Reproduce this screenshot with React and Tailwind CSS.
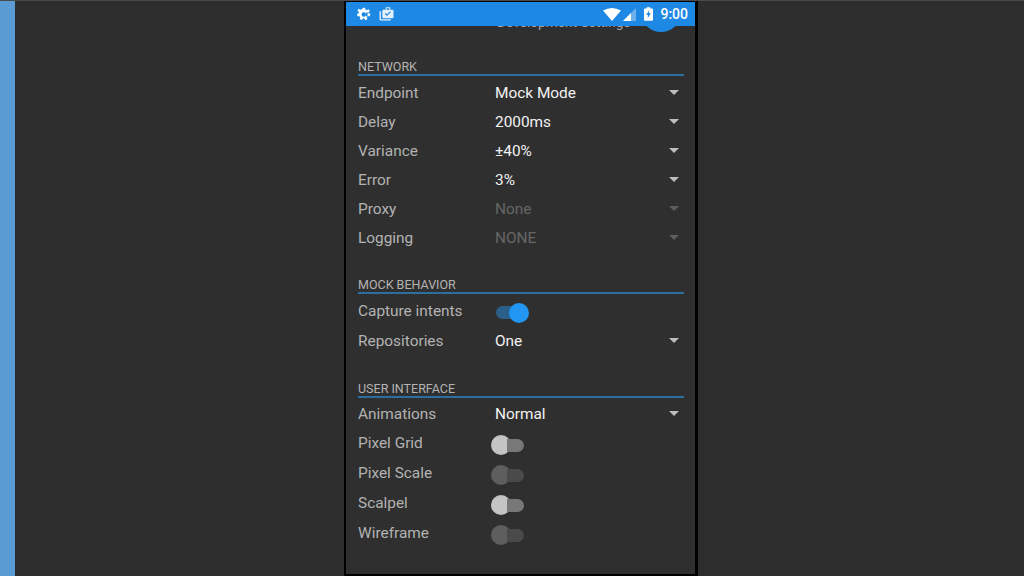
import React from 'react';

const Select = ({ label, value, disabled }) => (
  <div className="flex items-center h-[29px]">
    <span className="w-[137px] text-[#b3b3b3]">{label}</span>
    <span className={`flex-1 ${disabled ? 'text-[#666666]' : 'text-[#f2f2f2]'}`}>{value}</span>
    <span className={`mr-[5px] -mt-[2px] w-0 h-0 border-x-[5px] border-x-transparent border-t-[5px] ${disabled ? 'border-t-[#5c5c5c]' : 'border-t-[#bdbdbd]'}`}></span>
  </div>
);

const Toggle = ({ label, thumb, track }) => (
  <div className="flex items-center h-[30px]">
    <span className="w-[133px] -mt-[3px] text-[#b3b3b3]">{label}</span>
    <div className="flex items-center">
      <span className={`w-[20px] h-[20px] rounded-full ${thumb}`}></span>
      <span className={`-ml-[4px] w-[17px] h-[13px] rounded-r-full ${track}`}></span>
    </div>
  </div>
);

const Section = ({ title, className, children }) => (
  <div className={className}>
    <div className="h-[19px] text-[12.5px] leading-[19px] text-[#b3b3b3] border-b-2 border-[#2a6f9e]">{title}</div>
    {children}
  </div>
);

const GearIcon = () => (
  <svg width="15" height="15" viewBox="0 0 24 24" fill="#fff">
    <path d="M12 1l2.500 0 .6 3 2.200 1 2.600-1.600 2.400 2.800-2.200 2-.1 2.200 2.700 1.200-.9 3.600-3-.4-1.500 1.700.9 3-3.400 1.500-1.500-2.700-2.400-.1-1.600 2.600-3.300-1.500 1-3-1.600-1.700-3 .2-.8-3.600 2.800-1 .1-2.400-2.300-2 2.300-2.800 2.500 1.600 2-1z" />
    <circle cx="12.500" cy="12" r="3.600" fill="#1e88e5" />
    <path d="M16 9h8v6h-8z" fill="#1e88e5" />
    <circle cx="20.500" cy="12" r="2.400" fill="#fff" />
  </svg>
);

const StatusBar = () => (
  <div className="relative z-10 h-[24px] bg-[#1e88e5] flex items-center pl-[10px] pr-[7px] text-white">
    <GearIcon />
    <svg className="ml-[8px]" width="15" height="14" viewBox="0 0 15 15" fill="#e3f0fb">
      <path d="M0 4.500h1.500v8.500H12v1.500H1.500A1.500 1.500 0 0 1 0 13z" />
      <path d="M4 3h2.500V1.200A1 1 0 0 1 7.500 .2h3a1 1 0 0 1 1 1V3H14a1 1 0 0 1 1 1v7a1 1 0 0 1-1 1H4a1 1 0 0 1-1-1V4a1 1 0 0 1 1-1zm3.500 0h3V1.300h-3z" />
      <path d="M6.200 7l1.800 1.800L11.800 5" stroke="#1e88e5" strokeWidth="1.300" fill="none" />
    </svg>
    <div className="flex-1"></div>
    <svg width="18" height="13" viewBox="0 0 18 13" fill="#fff">
      <path d="M0 2.500Q9-2.500 18 2.500L9 13z" />
    </svg>
    <svg className="ml-[2px]" width="14" height="13" viewBox="0 0 14 13">
      <path d="M0 13L13 0v13z" fill="#fff" fillOpacity="0.35" />
      <path d="M0 13L8 5v8z" fill="#fff" />
    </svg>
    <svg className="ml-[7px]" width="9" height="14" viewBox="0 0 10 15">
      <path d="M3 0h4v1.500h2a1 1 0 0 1 1 1V14a1 1 0 0 1-1 1H1a1 1 0 0 1-1-1V2.500a1 1 0 0 1 1-1h2z" fill="#fff" />
      <path d="M5.800 3L2.500 8.500h2L4 12.500 7.500 6.500h-2.200z" fill="#1e88e5" />
    </svg>
    <span className="ml-[7px] text-[14px] leading-none font-medium">9:00</span>
  </div>
);

export default function App() {
  return (
    <div className="h-[576px] w-[1024px] overflow-hidden bg-[#2d2d2d] border-t border-[#4a4a4a] flex font-['Roboto',sans-serif] text-[15.4px]">
      <div className="w-[15px] bg-[#5a9bd4]"></div>
      <div className="ml-[329px] w-[354px] h-[575px] bg-[#2f2f2f] border-l-2 border-r-[3px] border-b-[2px] border-t border-black flex flex-col overflow-hidden">
        <StatusBar />
        <div className="relative flex-1 pl-[12px] pr-[11px]">
          <div className="absolute left-[151px] -top-[14px] text-[13.7px] leading-[20px] text-[#a8a8a8]">Development Settings</div>
          <div className="absolute left-[295px] -top-[26px] w-[40px] h-[32px] rounded-b-full bg-[#1e88e5]"></div>
          <Section title="NETWORK" className="pt-[31px]">
            <div className="pt-[3px]">
              <Select label="Endpoint" value="Mock Mode" />
              <Select label="Delay" value="2000ms" />
              <Select label="Variance" value="±40%" />
              <Select label="Error" value="3%" />
              <Select label="Proxy" value="None" disabled />
              <Select label="Logging" value="NONE" disabled />
            </div>
          </Section>
          <Section title="MOCK BEHAVIOR" className="pt-[22px]">
            <div className="pt-[4px]">
              <div className="flex items-center h-[29px]">
                <span className="w-[138px] -mt-[2px] text-[#b3b3b3]">Capture intents</span>
                <div className="flex items-center">
                  <span className="w-[17px] h-[13px] rounded-l-full bg-[#2a5f8a]"></span>
                  <span className="-ml-[4px] w-[20px] h-[20px] rounded-full bg-[#2196f3]"></span>
                </div>
              </div>
              <Select label="Repositories" value="One" />
            </div>
          </Section>
          <Section title="USER INTERFACE" className="pt-[23px]">
            <div className="pt-[2px]">
              <Select label="Animations" value="Normal" />
              <div className="pt-px">
                <Toggle label="Pixel Grid" thumb="bg-[#c4c4c4]" track="bg-[#787878]" />
                <Toggle label="Pixel Scale" thumb="bg-[#5e5e5e]" track="bg-[#4a4a4a]" />
                <Toggle label="Scalpel" thumb="bg-[#c4c4c4]" track="bg-[#787878]" />
                <Toggle label="Wireframe" thumb="bg-[#5e5e5e]" track="bg-[#4a4a4a]" />
              </div>
            </div>
          </Section>
        </div>
      </div>
    </div>
  );
}
